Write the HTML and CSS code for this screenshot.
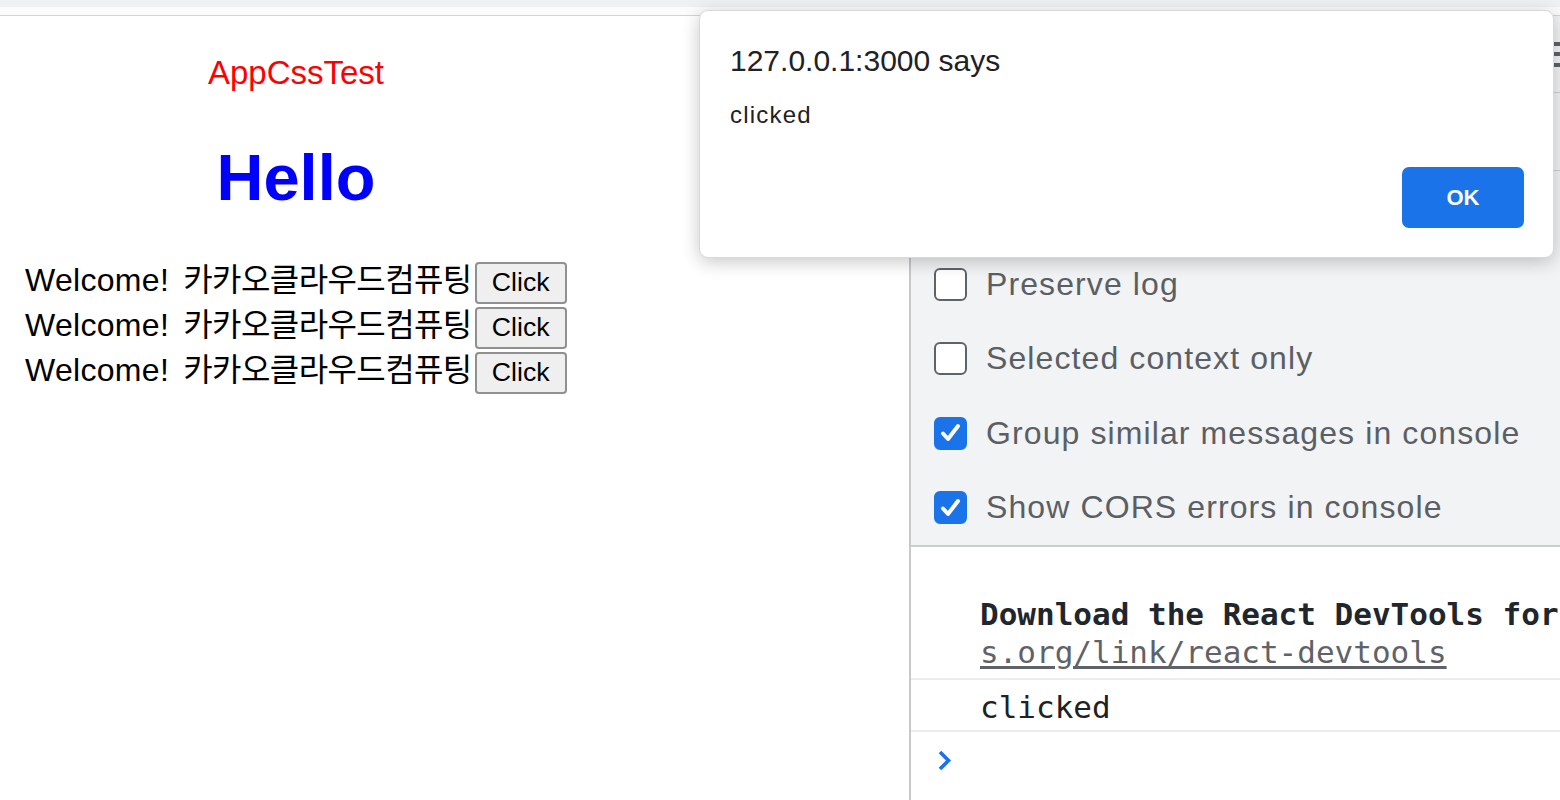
FILE: index.html
```html
<!DOCTYPE html>
<html lang="ko">
<head>
<meta charset="utf-8">
<title>AppCssTest</title>
<link rel="stylesheet" href="styles.css">
</head>
<body>
<div class="screen">
  <div class="topbar"></div>
  <div class="main">
    <div class="page">
      <div class="app">
        <div class="title">AppCssTest</div>
        <h1 class="hello">Hello</h1>
        <div class="rows">
          <div class="row"><span class="welcome">Welcome! <span class="ko">카카오클라우드컴퓨팅</span></span><button class="btn">Click</button></div>
          <div class="row"><span class="welcome">Welcome! <span class="ko">카카오클라우드컴퓨팅</span></span><button class="btn">Click</button></div>
          <div class="row"><span class="welcome">Welcome! <span class="ko">카카오클라우드컴퓨팅</span></span><button class="btn">Click</button></div>
        </div>
      </div>
    </div>
    <div class="devtools">
      <div class="dt-bar">
        <svg class="menu-icon" width="20" height="28" viewBox="0 0 20 28"><rect x="1" y="0" width="18" height="4" fill="#5f6368"/><rect x="1" y="10" width="18" height="4" fill="#5f6368"/><rect x="1" y="21" width="18" height="4" fill="#5f6368"/></svg>
      </div>
      <div class="dt-bar2"></div>
      <div class="settings">
        <label class="opt"><span class="cb"></span><span class="opt-text">Preserve log</span></label>
        <label class="opt"><span class="cb"></span><span class="opt-text">Selected context only</span></label>
        <label class="opt"><span class="cb cb-on"><svg width="33" height="33" viewBox="0 0 33 33"><path d="M9 17.5 L14 23 L24 10" fill="none" stroke="#fff" stroke-width="4" stroke-linecap="round" stroke-linejoin="round"/></svg></span><span class="opt-text">Group similar messages in console</span></label>
        <label class="opt"><span class="cb cb-on"><svg width="33" height="33" viewBox="0 0 33 33"><path d="M9 17.5 L14 23 L24 10" fill="none" stroke="#fff" stroke-width="4" stroke-linecap="round" stroke-linejoin="round"/></svg></span><span class="opt-text">Show CORS errors in console</span></label>
      </div>
      <div class="console">
        <div class="msg msg-first">
          <div class="line"><b class="strong">Download the React DevTools for a better development experience: </b><span class="link">https://reactj</span></div>
          <div class="line"><span class="link">s.org/link/react-devtools</span></div>
        </div>
        <div class="msg msg-second">
          <div class="line">clicked</div>
        </div>
        <div class="prompt">
          <svg width="16" height="24" viewBox="0 0 16 24"><path d="M3 3 L11.5 11.5 L3 20" fill="none" stroke="#1a73e8" stroke-width="3.6" stroke-linejoin="miter"/></svg>
        </div>
      </div>
    </div>
  </div>
  <div class="dialog">
    <div class="dlg-title">127.0.0.1:3000 says</div>
    <div class="dlg-msg">clicked</div>
    <div class="dlg-actions"><button class="ok">OK</button></div>
  </div>
</div>
</body>
</html>
```
FILE: styles.css
```css
* { box-sizing: border-box; }
html, body { margin: 0; padding: 0; }
body {
  width: 1560px;
  height: 800px;
  overflow: hidden;
  background: #fff;
  font-family: "Liberation Sans", Arial, sans-serif;
}
.screen {
  position: relative;
  width: 1560px;
  height: 800px;
  display: flex;
  flex-direction: column;
}
.topbar {
  height: 16px;
  flex: none;
  background: linear-gradient(#eff0f2 0, #eff0f2 7px, #fbfbfb 7px, #fbfbfb 15px, #d2d3d5 15px);
}
.main {
  flex: 1;
  display: flex;
  min-height: 0;
}
.page {
  width: 909px;
  flex: none;
  background: #fff;
}
.app {
  width: 592px;
  text-align: center;
  padding-top: 39px;
}
.title {
  font-size: 33px;
  line-height: 36px;
  color: #ff0000;
}
.hello {
  margin: 50px 0 0;
  font-size: 65px;
  line-height: 74px;
  font-weight: bold;
  color: #0000ff;
}
.rows {
  text-align: left;
  padding-left: 25px;
  margin-top: 40px;
}
.row {
  display: flex;
  align-items: baseline;
  height: 45px;
  white-space: nowrap;
}
.welcome {
  font-size: 32px;
  line-height: 45px;
  letter-spacing: 0.3px;
  color: #000;
}
.ko {
  font-family: "Noto Sans CJK KR", sans-serif;
  letter-spacing: -0.6px;
  margin-left: 5px;
}
.btn {
  margin-left: 3px;
  height: 42px;
  width: 92px;
  padding: 0;
  font-family: "Liberation Sans", Arial, sans-serif;
  font-size: 26.7px;
  color: #000;
  background: #efefef;
  border: 2px solid #909090;
  border-radius: 4px;
}

.devtools {
  flex: 1;
  border-left: 2px solid #c6c8cc;
  background: #f1f3f4;
  display: flex;
  flex-direction: column;
  min-width: 0;
}
.dt-bar {
  height: 77px;
  border-bottom: 1px solid #cdd0d4;
  display: flex;
  align-items: flex-start;
  justify-content: flex-end;
  padding-top: 26px;
}
.menu-icon { margin-right: -12px; }
.dt-bar2 {
  height: 78px;
  border-bottom: 1px solid #cdd0d4;
}
.settings {
  padding: 76px 0 0 23px;
  border-bottom: 2px solid #cbcdd1;
}
.opt {
  display: flex;
  align-items: center;
  height: 74.5px;
  gap: 19px;
}
.cb {
  width: 33px;
  height: 33px;
  border: 2.5px solid #5f6368;
  border-radius: 6px;
  background: #fff;
  flex: none;
  position: relative;
}
.cb-on {
  background: #1a73e8;
  border-color: #1a73e8;
}
.cb-on svg { position: absolute; left: -2.5px; top: -2.5px; }
.opt-text {
  font-size: 32px;
  letter-spacing: 1.1px;
  color: #5b5f64;
  white-space: nowrap;
}
.console {
  flex: 1;
  background: #fff;
  font-family: "DejaVu Sans Mono", monospace;
  font-size: 31px;
  color: #202124;
  overflow: hidden;
}
.msg {
  padding-left: 69px;
  border-bottom: 2px solid #ebecee;
}
.msg-first { padding-top: 48px; padding-bottom: 7px; }
.msg-second { padding-top: 8px; padding-bottom: 4px; }
.line {
  line-height: 38px;
  white-space: nowrap;
}
.strong { font-weight: bold; color: #21262c; }
.link {
  color: #5f6368;
  text-decoration: underline;
  text-underline-offset: 3px;
}
.prompt {
  padding: 12px 0 0 26px;
  height: 50px;
}

.dialog {
  position: absolute;
  left: 699px;
  top: 10px;
  width: 855px;
  height: 248px;
  background: #fff;
  border-radius: 9px;
  border: 1px solid #d9d9d9;
  box-shadow: 0 4px 18px rgba(0, 0, 0, 0.22);
  padding: 30px 29px 0 30px;
  display: flex;
  flex-direction: column;
}
.dlg-title {
  font-size: 30px;
  line-height: 40px;
  color: #202124;
}
.dlg-msg {
  margin-top: 19px;
  font-size: 24px;
  letter-spacing: 1.2px;
  line-height: 30px;
  color: #202124;
}
.dlg-actions {
  display: flex;
  justify-content: flex-end;
  margin-top: 37px;
}
.ok {
  width: 122px;
  height: 61px;
  background: #1a73e8;
  color: #fff;
  border: none;
  border-radius: 7px;
  font-family: "Liberation Sans", Arial, sans-serif;
  font-weight: bold;
  font-size: 22px;
}
```
